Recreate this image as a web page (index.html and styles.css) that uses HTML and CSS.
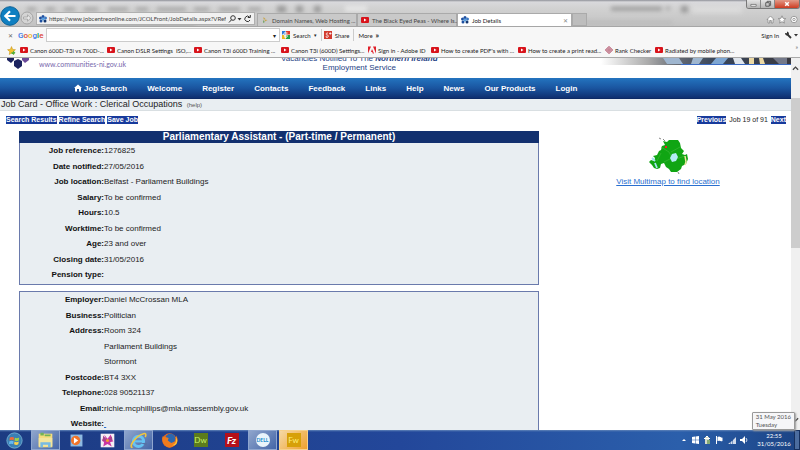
FILE: index.html
```
<!DOCTYPE html>
<html lang="en">
<head>
    <meta charset="UTF-8">
    <meta name="viewport" content="width=device-width, initial-scale=1.0">
    <title>Job Details</title>
    <link rel="stylesheet" href="styles.css">
</head>
<body>

    <!-- shared icons -->
    <svg class="defs" aria-hidden="true">
        <symbol id="yt" viewBox="0 0 16 12"><rect width="16" height="12" rx="2" fill="#d8131b"/><path d="M6 3l5 3-5 3z" fill="#fff"/></symbol>
        <symbol id="flower" viewBox="0 0 16 16"><g fill="#1d4fa0"><circle cx="8" cy="3" r="3"/><circle cx="3" cy="6" r="3"/><circle cx="13" cy="6" r="3" fill="#3c78c4"/><circle cx="4" cy="12" r="3"/><circle cx="12" cy="12" r="3" fill="#12356f"/></g><circle cx="8" cy="8" r="3" fill="#58a0e0"/></symbol>
    </svg>

    <header class="browser">
        <div class="titlebar">
            <!-- blurred glass showing the window behind -->
            <svg class="glass" viewBox="0 0 800 27" preserveAspectRatio="none" aria-hidden="true">
                <g class="smudge" fill="#777">
                    <rect x="27" y="8" width="9" height="3"/><rect x="46" y="8" width="9" height="3"/><rect x="64" y="8" width="11" height="3"/><rect x="84" y="8" width="14" height="3"/><rect x="108" y="8" width="20" height="3"/><rect x="136" y="8" width="12" height="3"/><rect x="157" y="8" width="29" height="3"/><rect x="194" y="8" width="15" height="3"/><rect x="219" y="8" width="21" height="3"/><rect x="248" y="8" width="13" height="3"/>
                    <rect x="277" y="6" width="9" height="7"/><rect x="296" y="6" width="7" height="7"/><rect x="314" y="6" width="7" height="7"/>
                    <rect x="611" y="7" width="51" height="4"/><rect x="666" y="7" width="4" height="3"/><rect x="681" y="6" width="7" height="7"/>
                    <rect x="45" y="24" width="150" height="2"/><rect x="572" y="22" width="100" height="2" opacity=".4"/>
                </g>
                <g class="smudge" fill="#f4f4f4"><rect x="345" y="6" width="22" height="6"/><rect x="692" y="6" width="50" height="8" opacity=".5"/></g>
            </svg>
            <div class="window-buttons">
                <button aria-label="Minimise"><svg viewBox="0 0 14 9"><path d="M4 5h6v2H4z" fill="#fff" stroke="#555" stroke-width=".7"/></svg></button>
                <button aria-label="Restore"><svg viewBox="0 0 14 9"><path d="M5 3h4v4H5zM6.500 3V1.500h4V6H9" fill="none" stroke="#555"/></svg></button>
                <button class="close" aria-label="Close"><svg viewBox="0 0 20 9"><path d="M8 2.500l4 4m0-4l-4 4" stroke="#fff" stroke-width="1.700"/></svg></button>
            </div>
            <button class="back" aria-label="Back"><svg viewBox="0 0 20 20"><circle cx="10" cy="10" r="9.300" fill="#0f7fc1" stroke="#0a6197"/><path d="M15.500 10H5.500M10 5.300L5.300 10l4.700 4.700" fill="none" stroke="#fff" stroke-width="2.200"/></svg></button>
            <button class="forward" aria-label="Forward"><svg viewBox="0 0 14 14"><circle cx="7" cy="7" r="6" fill="#d4d4d4" stroke="#a5a5a5"/><path d="M3.500 6h4V3.800L10.800 7 7.500 10.200V8h-4z" fill="#e8e8e8" stroke="#999" stroke-width=".7"/></svg></button>
            <div class="address">
                <svg class="icon" viewBox="0 0 16 16"><use href="#flower"/></svg>
                <input type="text" aria-label="Address" value="https://www.jobcentreonline.com/JCOLFront/JobDetails.aspx?VRefe">
                <svg class="address-tools" viewBox="0 0 24 10" aria-hidden="true"><circle cx="5" cy="4" r="2.300" fill="none" stroke="#333"/><path d="M3.500 5.800L1 8.500" stroke="#333"/><path d="M9.500 4h4l-2 2.500z" fill="#333"/><path d="M21.500 3a2.700 2.700 0 1 0 .5 3M22.300 1v2.500h-2.500" fill="none" stroke="#333"/></svg>
            </div>
            <nav class="tabs" aria-label="Tabs">
                <a class="tab" href="#"><svg class="icon" viewBox="0 0 16 16"><path d="M5 2l4 4-4 1zM7 7l6 1-5 3z" fill="#c8a54a"/><path d="M4 8l4 4-4 2z" fill="#7aa66a"/></svg>Domain Names, Web Hosting ...</a>
                <a class="tab" href="#"><svg class="icon" viewBox="0 0 16 12"><use href="#yt"/></svg>The Black Eyed Peas - Where Is...</a>
                <a class="tab current" href="#"><svg class="icon" viewBox="0 0 16 16"><use href="#flower"/></svg>Job Details<span class="tab-close">✕</span></a>
                <button class="new-tab" aria-label="New tab"></button>
            </nav>
            <div class="tools">
                <svg viewBox="0 0 32 9" aria-hidden="true"><g fill="#fff" stroke="#888" stroke-width=".8"><path d="M1 4.500l3.500-3.500L8 4.500H7V8H5.300V5.500H3.700V8H2V4.500z"/><path d="M16 .8l1.100 2.500 2.700.3-2 1.800.6 2.700-2.400-1.400-2.400 1.400.6-2.700-2-1.800 2.700-.3z"/><circle cx="28" cy="4.500" r="3.200"/><circle cx="28" cy="4.500" r="1.200"/></g></svg>
            </div>
        </div>

        <div class="googlebar">
            <button class="bar-close" aria-label="Close toolbar">✕</button>
            <span class="google"><i class="b">G</i><i class="r">o</i><i class="y">o</i><i class="b">g</i><i class="g">l</i><i class="r">e</i></span>
            <div class="google-box">
                <input type="text" aria-label="Google search">
                <button aria-label="Search history">▾</button>
            </div>
            <button class="bar-item"><svg class="icon" viewBox="0 0 16 16"><path fill="#2a78d8" d="M0 0h7v7H0z"/><path fill="#dc3a2b" d="M8 0h8v7H8z"/><path fill="#e8b520" d="M0 8h7v8H0z"/><path fill="#21a04a" d="M8 8h8v8H8z"/><path d="M11 4H8a3 3 0 1 0 1 4c2 1 2 5-2 5-3 0-3-3 1-3" fill="none" stroke="#fff" stroke-width="2"/></svg>Search <small>▾</small></button>
            <button class="bar-item"><svg class="icon" viewBox="0 0 16 16"><path fill="#d23a2e" d="M0 0h16v16H0z"/><path d="M8 4H6a2 2 0 1 0 1 4c3 1 2 5-1 5s-3-3 1-3M10 5h5M12.500 2.500v5" fill="none" stroke="#fff" stroke-width="1.500"/></svg>Share</button>
            <button class="bar-item">More <b>»</b></button>
            <a class="sign-in" href="#">Sign In</a>
            <svg class="wrench" viewBox="0 0 14 8" aria-hidden="true"><path d="M3.500 3.500L7 7" stroke="#333" stroke-width="1.800"/><path d="M1 2a2.200 2.200 0 0 0 3.500 2A2.200 2.200 0 0 0 3 .5v1.700z" fill="#333"/><path d="M10 3h4l-2 2.500z" fill="#333"/></svg>
        </div>

        <nav class="favourites" aria-label="Favourites">
            <svg class="star" viewBox="0 0 16 16" aria-hidden="true"><path d="M8 1l2 5 5 .5-4 3.500 1 5-4-2.500L4 15l1-5-4-3.500L6 6z" fill="#f4c531" stroke="#c89214"/><path d="M8 11h3V8l4 4-4 4v-2H8z" fill="#4dae38"/></svg>
            <a href="#"><svg class="icon" viewBox="0 0 16 12"><use href="#yt"/></svg>Canon 600D-T3i vs 700D-...</a>
            <a href="#"><svg class="icon" viewBox="0 0 16 12"><use href="#yt"/></svg>Canon DSLR Settings&nbsp; ISO,...</a>
            <a href="#"><svg class="icon" viewBox="0 0 16 12"><use href="#yt"/></svg>Canon T3i 600D Training ...</a>
            <a href="#"><svg class="icon" viewBox="0 0 16 12"><use href="#yt"/></svg>Canon T3i (600D) Settings...</a>
            <a class="medium" href="#"><svg class="icon" viewBox="0 0 16 14"><path d="M0 0h6L0 14zM10 0h6v14zM8 5l4 9H9.500l-1-3H6z" fill="#e0202a"/></svg>Sign in - Adobe ID</a>
            <a href="#"><svg class="icon" viewBox="0 0 16 12"><use href="#yt"/></svg>How to create PDF's with ...</a>
            <a href="#"><svg class="icon" viewBox="0 0 16 12"><use href="#yt"/></svg>How to create a print read...</a>
            <a class="short" href="#"><svg class="icon" viewBox="0 0 16 16"><path d="M8 1l7 7-7 7-7-7z" fill="none" stroke="#a02a48" stroke-width="2"/><path d="M8 4l4 4-4 4-4-4z" fill="#a02a48"/><path d="M8 6v4M6 8h4" stroke="#fff"/></svg>Rank Checker</a>
            <a href="#"><svg class="icon" viewBox="0 0 16 12"><use href="#yt"/></svg>Radiated by mobile phon...</a>
            <span class="more">»</span>
        </nav>
    </header>

    <div class="viewport">
        <div class="page">
            <div class="masthead">
                <div class="logo">
                    <svg viewBox="0 0 22 11" aria-hidden="true"><path d="M0 0h7v2L4 5 0 2z" fill="#1c2360"/><path d="M15 0h7v2l-4 3-3-3z" fill="#6b4a9a"/><path d="M7 3l4-2 4 2v5l-4 3-4-3z" fill="#1c2360"/></svg>
                    <a href="#">www.communities-ni.gov.uk</a>
                </div>
                <p class="strapline">Vacancies Notified To The <b><i>Northern Ireland</i></b><br>Employment Service</p>
                <svg class="photo" viewBox="0 0 190 7" preserveAspectRatio="none" aria-hidden="true">
                    <defs><linearGradient id="fade"><stop offset="0" stop-color="#fff"/><stop offset=".25" stop-color="#aaa"/><stop offset=".4" stop-color="#666b74"/><stop offset=".6" stop-color="#39465a"/><stop offset="1" stop-color="#3a3a42"/></linearGradient></defs>
                    <path d="M0 0h190v7H0z" fill="url(#fade)"/>
                    <path d="M62 0h16l4 6H66zM92 0h10l-4 6h-8z" fill="#9fb6cf"/><path d="M115 0h12l-5 6h-12z" fill="#7ea6d2"/><path d="M148 0h5v6h-5zM158 0h4l2 6h-5z" fill="#ecd9a4"/><path d="M132 0h8l4 6h-10z" fill="#dfe5ec"/><path d="M172 0h14v6h-8z" fill="#74798a"/>
                    <path d="M80 6h110v1H80z" fill="#3b6bc4"/>
                </svg>
            </div>

            <nav class="menu" aria-label="Main">
                <a href="#"><svg class="home" viewBox="0 0 16 16"><path d="M8 1L0 8h2v7h4v-5h4v5h4V8h2z" fill="#fff"/></svg>Job Search</a>
                <a href="#">Welcome</a>
                <a href="#">Register</a>
                <a href="#">Contacts</a>
                <a href="#">Feedback</a>
                <a href="#">Links</a>
                <a href="#">Help</a>
                <a href="#">News</a>
                <a href="#">Our Products</a>
                <a href="#">Login</a>
            </nav>

            <h1>Job Card - Office Work : Clerical Occupations <a href="#">(help)</a></h1>

            <div class="actions">
                <button>Search Results</button>
                <button>Refine Search</button>
                <button>Save Job</button>
                <div class="pager">
                    <button>Previous</button>
                    <span>Job 19 of 91</span>
                    <button>Next</button>
                </div>
            </div>

            <div class="columns">
                <main>
                    <section class="panel">
                        <h2>Parliamentary Assistant - (Part-time / Permanent)</h2>
                        <table>
                            <tr><th scope="row">Job reference:</th><td>1276825</td></tr>
                            <tr><th scope="row">Date notified:</th><td>27/05/2016</td></tr>
                            <tr><th scope="row">Job location:</th><td>Belfast - Parliament Buildings</td></tr>
                            <tr><th scope="row">Salary:</th><td>To be confirmed</td></tr>
                            <tr><th scope="row">Hours:</th><td>10.5</td></tr>
                            <tr><th scope="row">Worktime:</th><td>To be confirmed</td></tr>
                            <tr><th scope="row">Age:</th><td>23 and over</td></tr>
                            <tr><th scope="row">Closing date:</th><td>31/05/2016</td></tr>
                            <tr><th scope="row">Pension type:</th><td></td></tr>
                        </table>
                    </section>
                    <section class="panel">
                        <table>
                            <tr><th scope="row">Employer:</th><td>Daniel McCrossan MLA</td></tr>
                            <tr><th scope="row">Business:</th><td>Politician</td></tr>
                            <tr><th scope="row">Address:</th><td>Room 324</td></tr>
                            <tr><th></th><td>Parliament Buildings</td></tr>
                            <tr><th></th><td>Stormont</td></tr>
                            <tr><th scope="row">Postcode:</th><td>BT4 3XX</td></tr>
                            <tr><th scope="row">Telephone:</th><td>028 90521137</td></tr>
                            <tr><th scope="row">Email:</th><td>richie.mcphillips@mla.niassembly.gov.uk</td></tr>
                            <tr><th scope="row">Website:</th><td><a href="#">&nbsp;</a></td></tr>
                        </table>
                    </section>
                </main>
                <aside>
                    <svg class="map" viewBox="0 0 42 38" role="img" aria-label="Map of Northern Ireland">
                        <path d="M16 4l4 1 2-2h9l2 3 1 5 3 3-2 3 3 1 2-1 1 5-2 5-4 2-1 3-4 3h-6l-2-3-3-2-2-4-3 1-1 4-3 1-3-1-2-3-3-3 2-2 3 1 1-3-2-2 4-1 2-4 2-1 1-4 3-1z" fill="#10a513"/>
                        <path d="M14 10l8 5 3 6-8 4M33 10l-9 5M38 19l-9 3-4-2M14 16l-4 8" fill="none" stroke="#3fb83a" stroke-width=".6"/>
                        <path d="M25 17l4-1 2 4-2 4-4 1-2-4z" fill="#b4ecf4"/><path d="M5 21l3 3M8 26l2 5" stroke="#a5e4f2" stroke-width="1.800"/><path d="M38 19l1 6-1 3" fill="none" stroke="#f0e6a0" stroke-width="1.500"/>
                        <path d="M18 9h2v2h-2z" fill="#e22"/><path d="M12 1l2 1M16 2l2 2M31 35l1 2" stroke="#888"/>
                    </svg>
                    <a href="#">Visit Multimap to find location</a>
                </aside>
            </div>
        </div>

        <div class="scrollbar" aria-hidden="true">
            <svg viewBox="0 0 8 6"><path d="M1 5l3-3 3 3" fill="none" stroke="#444" stroke-width="1.500"/></svg>
            <div class="thumb"></div>
            <svg viewBox="0 0 8 6"><path d="M1 1l3 3 3-3" fill="none" stroke="#444" stroke-width="1.500"/></svg>
        </div>
    </div>

    <footer class="taskbar">
        <button aria-label="Start"><svg viewBox="0 0 20 20"><circle cx="10" cy="10" r="9" fill="#3a7fb4" stroke="#79b2d4"/><path d="M4.500 6.500Q7 5 9.500 6.500L9 10Q6.500 8.500 4 10z" fill="#ee6a3a"/><path d="M10.500 6.800Q13 8 15.500 6.500L15 10Q12.500 11.500 10 10z" fill="#9ccf4a"/><path d="M4 11q2.500-1.500 5 0l-.5 3.500Q6 13 3.500 14.500z" fill="#66b9ef"/><path d="M10 11.200q2.500 1.500 5 0l-.5 3.300q-2.500 1.500-5 0z" fill="#fbd24b"/></svg></button>
        <button class="open" aria-label="Explorer"><svg viewBox="0 0 20 20"><path d="M2 2h16v16H2z" fill="#f7dc7c"/><path d="M4 1h4v3H4zM9 3h7v2H9z" fill="#72b356"/><path d="M2 7h16v10H2z" fill="#f3e59d"/><path d="M4 12h12v6h-3v-3H7v3H4z" fill="#78bbe2"/></svg></button>
        <button aria-label="Media Player"><svg viewBox="0 0 20 20"><path d="M3 3h14v14H3z" fill="#8ebae2"/><circle cx="9" cy="10" r="5.500" fill="#f2742a"/><path d="M7 6.500l5 3.500-5 3.500z" fill="#fff"/></svg></button>
        <button aria-label="Picture viewer"><svg viewBox="0 0 20 20"><path d="M2 2h16v16H2z" fill="#f5eef4"/><path d="M10 8l4-5 1 6 2 2-4 1 2 5-5-3-5 3 1-5-3-3 5-1-2-5z" fill="#c936a2"/><path d="M5 4l5 6-6 1zM11 9l4-4 1 5z" fill="#a8458c"/><circle cx="10" cy="10" r="1.800" fill="#f49b2e"/></svg></button>
        <button class="open" aria-label="Internet Explorer"><svg viewBox="0 0 20 20"><circle cx="10" cy="11" r="6" fill="none" stroke="#65c3f3" stroke-width="3.500"/><path d="M5 11h11" stroke="#65c3f3" stroke-width="2.500"/><path d="M12 13h8v3z" fill="#5672a6"/><path d="M3 18C-2 19 5 5 16 2q4-1 2 4" fill="none" stroke="#f1c63e" stroke-width="1.800"/></svg></button>
        <button aria-label="Firefox"><svg viewBox="0 0 20 20"><circle cx="10" cy="10" r="8.500" fill="#e8681c"/><circle cx="11" cy="8" r="6" fill="#2c67ae"/><path d="M2 5l3 1 4 1-1 3 4 3 5-2 1-7q4 8-2 12-7 5-12-1-4-5-2-10z" fill="#ee7b1e"/><path d="M17 5q3 8-4 11 7 0 6-7z" fill="#f9c638"/></svg></button>
        <button aria-label="Dreamweaver"><span class="tile dw">Dw</span></button>
        <button aria-label="FileZilla"><span class="tile fz">Fz</span></button>
        <button class="open" aria-label="Dell"><span class="tile dell">DELL</span></button>
        <button class="open hot" aria-label="Fireworks"><span class="tile fw">Fw</span></button>
        <div class="tray">
            <svg viewBox="0 0 68 10" aria-hidden="true"><g fill="#fff"><path d="M0 6l2-2 2 2z"/><path d="M10 2l3-.5v3.200h-3zM13.500 1.500L17 1v3.700h-3.500zM10 5.300h3v3.200L10 8zM13.500 5.300H17V9l-3.500-.5z"/><path d="M23 2h4v7h-4z" fill="#d7dccb"/><path d="M22 3h6v1h-6zM24 1h2v1h-2z"/><path d="M25 5h3v4h-3z" fill="#84ab77"/><path d="M34 1h1v8h-1zM35.500 2q1.500-1 3 0t2 .5V6q-1 .5-2 0t-3 0z"/><path d="M46 9h2V7.500zM48.500 9h2V5.500l-2 1.700zM51 9h3V2l-3 3z" opacity=".8"/><path d="M58 4h2l3-3v8L60 6h-2z"/></g><path d="M64 3q2 2 0 4" fill="none" stroke="#fff" stroke-width=".8"/></svg>
            <div class="clock"><time>22:55</time><time>31/05/2016</time></div>
            <button class="desktop" aria-label="Show desktop"></button>
        </div>
        <div class="tooltip" role="tooltip">31 May 2016<br>Tuesday</div>
    </footer>

</body>
</html>
```

FILE: styles.css
```
:root {
    --ui-font: Lato, "Open Sans", sans-serif;
    --page-font: "Liberation Sans", Arial, sans-serif;
    --navy: #12306f;
    --panel: #e9eef2;
    --link: #2a6fcf;
}

* {
    box-sizing: border-box;
}

body {
    margin: 0;
    height: 100vh;
    display: flex;
    flex-direction: column;
    overflow: hidden;
    background: #fff;
    font-family: var(--page-font);
    font-size: 8px;
    color: #222;
}

button {
    border: 0;
    padding: 0;
    background: none;
    font: inherit;
    color: inherit;
    cursor: pointer;
}

input {
    min-width: 0;
    border: 0;
    padding: 0;
    background: none;
    font: inherit;
    color: inherit;
    outline: none;
}

a {
    color: inherit;
    text-decoration: none;
}

svg {
    display: block;
    flex: none;
}

.defs {
    position: absolute;
    width: 0;
    height: 0;
}

.icon {
    width: 8px;
    height: 8px;
}

/* browser window */
.browser {
    flex: none;
    font-family: var(--ui-font);
    font-size: 6px;
    background: #f7f7f7;
    border-bottom: 1px solid #a9a9a9;
}

.titlebar {
    position: relative;
    display: flex;
    align-items: flex-end;
    height: 27px;
    background: linear-gradient(#8f9199 0, #d9d9dc 2px, #d2d2d2 8px, #c9c9c9 18px, #c2c2c2);
    border-bottom: 1px solid #a6a6a6;
}

.glass {
    position: absolute;
    inset: 0;
    width: 100%;
    height: 100%;
}

.smudge {
    filter: blur(2px);
    opacity: 0.6;
}

.titlebar > :not(.glass):not(.window-buttons) {
    position: relative;
}

.window-buttons {
    position: absolute;
    top: 0;
    right: 0;
    display: flex;
    border: 1px solid #777;
    border-top: 0;
    border-radius: 0 0 3px 3px;
    overflow: hidden;
}

.window-buttons button {
    width: 14px;
    height: 8px;
    border-right: 1px solid #888;
    background: linear-gradient(#e4e4e4, #b5b5b5);
}

.window-buttons .close {
    width: 24px;
    border: 0;
    background: linear-gradient(#e29a88, #cd3c22);
}

.window-buttons svg {
    width: 100%;
    height: 8px;
}

.back svg {
    width: 20px;
    height: 20px;
}

.forward {
    margin: 0 2px 0 0;
    padding-bottom: 1px;
}

.forward svg {
    width: 14px;
    height: 14px;
}

.address {
    display: flex;
    align-items: center;
    gap: 2px;
    width: 219px;
    height: 13px;
    padding: 0 2px;
    background: #f1f1f1;
    border: 1px solid #b0b0b0;
    margin-bottom: 1px;
}

.address input {
    flex: 1;
    color: #444;
}

.address-tools {
    width: 24px;
    height: 10px;
}

.tabs {
    display: flex;
    align-items: flex-end;
    margin-left: 2px;
}

.tab {
    display: flex;
    align-items: center;
    gap: 3px;
    width: 100px;
    height: 13px;
    padding: 0 3px;
    white-space: nowrap;
    color: #444;
    background: #c9c9c9;
    border: 1px solid #aaa;
    border-bottom: 0;
}

.tab.current {
    width: 115px;
    color: #222;
    background: #fff;
}

.tab-close {
    margin-left: auto;
    color: #888;
}

.new-tab {
    width: 15px;
    height: 13px;
    background: #bdbdbd;
    border: 1px solid #aaa;
}

.tools {
    margin: 0 2px 2px auto;
}

.tools svg {
    width: 32px;
    height: 9px;
}

.googlebar {
    display: flex;
    align-items: center;
    height: 16px;
    padding: 0 2px 0 6px;
}

.bar-close {
    width: 8px;
    color: #666;
}

.google {
    width: 32px;
    padding-left: 4px;
    font-family: Roboto, sans-serif;
    font-size: 8px;
    font-weight: 500;
}

.google i {
    font-style: normal;
}

.google .b { color: #3a78e7; }
.google .r { color: #dc4437; }
.google .y { color: #eeb211; }
.google .g { color: #109d58; }

.google-box {
    display: flex;
    width: 234px;
    height: 14px;
    padding: 0 3px;
    background: #fff;
    border: 1px solid #ccc;
}

.google-box input {
    flex: 1;
}

.bar-item {
    display: flex;
    align-items: center;
    gap: 3px;
    padding: 0 4px 0 2px;
    height: 12px;
    border-right: 1px solid #ccc;
}

.bar-item:last-of-type {
    padding-left: 4px;
    border-right: 0;
}

.bar-item b {
    font-size: 8px;
}

.sign-in {
    margin-left: auto;
    margin-right: 5px;
}

.wrench {
    width: 14px;
    height: 8px;
}

.favourites {
    display: flex;
    align-items: center;
    height: 14px;
    padding-left: 7px;
    white-space: nowrap;
}

.star {
    width: 9px;
    height: 9px;
    margin-right: 4px;
}

.favourites a {
    display: flex;
    align-items: center;
    gap: 2px;
    width: 87px;
}

.favourites .medium {
    width: 63px;
}

.favourites .short {
    width: 50px;
}

.more {
    margin: 0 2px 8px auto;
    color: #666;
}

/* web page */
.viewport {
    flex: 1;
    display: flex;
    min-height: 0;
    overflow: hidden;
}

.page {
    flex: 1;
    min-width: 0;
}

.masthead {
    display: flex;
    align-items: flex-start;
    height: 20px;
    overflow: hidden;
}

.logo {
    display: flex;
    width: 281px;
    padding-left: 7px;
    gap: 10px;
}

.logo svg {
    width: 22px;
    height: 11px;
}

.logo a {
    padding-top: 2px;
    font-family: Lato, sans-serif;
    font-size: 7px;
    color: #7767ab;
}

.strapline {
    margin: -4px 0 0;
    line-height: 9px;
    text-align: center;
    color: #253f85;
}

.photo {
    width: 190px;
    height: 7px;
    margin-left: auto;
}

.menu {
    display: flex;
    align-items: center;
    gap: 20px;
    height: 21px;
    padding-left: 74px;
    background: linear-gradient(#2474bf, #1a55a0 50%, #0f2f70);
    border-bottom: 1px solid #0d2a66;
    color: #fff;
    font-weight: bold;
}

.menu a {
    display: flex;
    align-items: center;
    gap: 2px;
}

.home {
    width: 8px;
    height: 8px;
}

h1 {
    margin: 0;
    padding-left: 1px;
    font-size: 9px;
    line-height: 10px;
    font-weight: normal;
    background: var(--panel);
    border-bottom: 1px solid #d9dfe2;
}

h1 a {
    padding-left: 2px;
    font-size: 6px;
    color: #555;
}

.actions {
    display: flex;
    align-items: center;
    gap: 2px;
    padding: 5px 5px 7px 6px;
    font-size: 7px;
    line-height: 8px;
}

.actions button {
    background: #173a9c;
    color: #fff;
    font-weight: bold;
}

.pager {
    display: flex;
    gap: 3px;
    margin-left: auto;
}

.columns {
    display: flex;
}

main {
    flex: 1;
    padding: 0 6px 0 19px;
}

.panel {
    margin-bottom: 6px;
    padding-bottom: 2px;
    background: var(--panel);
    border: 1px solid #6a7aac;
}

h2 {
    margin: -1px -1px 0;
    font-size: 10px;
    line-height: 12px;
    text-align: center;
    color: #fff;
    background: var(--navy);
}

table {
    width: 100%;
    border-collapse: collapse;
}

th,
td {
    height: 15px;
    padding: 0;
    line-height: 9px;
}

tr:nth-child(even) > * {
    height: 16px;
}

th {
    width: 84px;
    text-align: right;
    color: #111;
}

td a {
    color: var(--link);
    text-decoration: underline;
}

aside {
    width: 246px;
    padding-top: 6px;
    text-align: center;
}

.map {
    width: 42px;
    height: 38px;
    margin: 0 auto 2px;
}

aside a {
    color: var(--link);
    text-decoration: underline;
}

.scrollbar {
    display: flex;
    flex-direction: column;
    align-items: center;
    width: 9px;
    padding: 7px 0;
    background: #f0f0f0;
}

.scrollbar svg {
    width: 7px;
    height: 6px;
}

.thumb {
    width: 100%;
    height: 42%;
    margin: 27px 0 auto;
    background: #cdcdcd;
}

/* desktop taskbar */
.taskbar {
    position: relative;
    flex: none;
    display: flex;
    height: 20px;
    gap: 2px;
    background: linear-gradient(#5f83b8 0, transparent 2px), linear-gradient(90deg, #1c3b82, #23479a 50%, #2b5fab 85%, #1b4384);
    font-family: var(--ui-font);
    font-size: 6px;
    color: #fff;
}

.taskbar > button {
    display: flex;
    align-items: center;
    justify-content: center;
    width: 29px;
}

.taskbar > button > svg {
    width: 17px;
    height: 17px;
}

.open {
    background: linear-gradient(135deg, #8fa5cc, #4566a8);
    border: 1px solid #8fa6cf;
}

.hot {
    background: linear-gradient(135deg, #f5d8a4, #eea12f);
    border-color: #f6d18c;
}

.tile {
    display: block;
    width: 14px;
    height: 14px;
    font-size: 8px;
    line-height: 14px;
    text-align: center;
}

.dw {
    background: #5c7c1c;
    color: #c9f36a;
}

.fz {
    background: #b5101a;
    font-size: 10px;
    font-weight: bold;
    font-style: italic;
}

.dell {
    border-radius: 50%;
    background: #e9f4fb;
    color: #1689cc;
    font-size: 5px;
    font-weight: bold;
}

.fw {
    background: #d7a008;
    color: #fff07a;
}

.tray {
    display: flex;
    align-items: center;
    margin-left: auto;
}

.tray svg {
    width: 68px;
    height: 10px;
    margin-right: 6px;
}

.clock {
    display: flex;
    flex-direction: column;
    width: 36px;
    line-height: 8px;
    text-align: center;
}

.desktop {
    width: 6px;
    height: 100%;
    margin-left: 2px;
    background: #4b6c9f;
    border: 1px solid #16305f;
}

.tooltip {
    position: absolute;
    right: 5px;
    bottom: 20px;
    padding: 0 3px;
    line-height: 8px;
    color: #555;
    background: #f6f6f8;
    border: 1px solid #999;
    border-radius: 1px;
    box-shadow: 1px 1px 2px #999;
}
```
